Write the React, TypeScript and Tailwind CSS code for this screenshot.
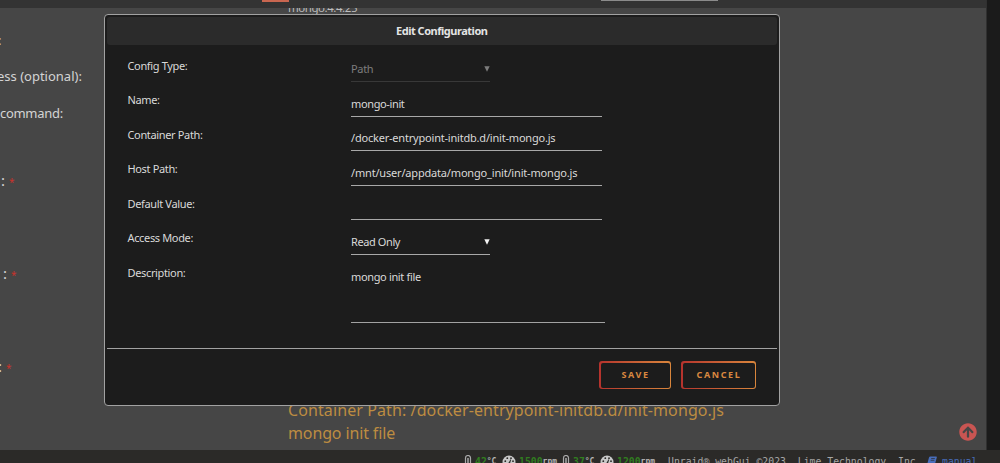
import type { ReactNode } from 'react';
import clsx from 'clsx';
import { FaArrowCircleUp } from 'react-icons/fa';

interface Field {
  label: string;
  value: string;
  kind: 'input' | 'select' | 'disabled';
  tracking: string;
}

const fields: Field[] = [
  { label: 'Config Type:', value: 'Path', kind: 'disabled', tracking: 'tracking-[-0.35px]' },
  { label: 'Name:', value: 'mongo-init', kind: 'input', tracking: 'tracking-[-0.37px]' },
  { label: 'Container Path:', value: '/docker-entrypoint-initdb.d/init-mongo.js', kind: 'input', tracking: 'tracking-[-0.2px]' },
  { label: 'Host Path:', value: '/mnt/user/appdata/mongo_init/init-mongo.js', kind: 'input', tracking: 'tracking-[-0.18px]' },
  { label: 'Default Value:', value: '', kind: 'input', tracking: 'tracking-normal' },
  { label: 'Access Mode:', value: 'Read Only', kind: 'select', tracking: 'tracking-[-0.4px]' }
];

function FieldRow({ label, value, kind, tracking }: Field) {
  return (
    <div className="flex h-[34.5px] items-end">
      <div className="w-[223.5px] pb-[8.5px] leading-4 tracking-[-0.35px]">{label}</div>
      <div
        className={clsx(
          'flex h-6 items-center justify-between border-b pb-[1px] leading-4',
          tracking,
          kind === 'input' ? 'w-[251px]' : 'w-[139px]',
          kind === 'disabled' ? 'border-[#383838] text-[#7c7c7c]' : 'border-[#a8a8a8]'
        )}
      >
        <span>{value}</span>
        {kind !== 'input' && (
          <svg viewBox="0 0 6 6" className={clsx('h-[6px] w-[6px]', kind === 'select' && 'text-[#f2f2f2]')} fill="currentColor">
            <path d="M0.3 0.2h5.4L3 5.8z" />
          </svg>
        )}
      </div>
    </div>
  );
}

function DialogButton({ children, className }: { children: ReactNode; className: string }) {
  return (
    <button className={clsx('h-7 rounded-[3px] bg-linear-to-r from-[#b5322d] to-[#d9863c] p-[1.5px]', className)}>
      <span className="flex h-full items-center justify-center rounded-[2px] bg-[#1c1c1c] pl-[1px] text-[9px] font-bold tracking-[1.6px] text-[#d98840]">
        {children}
      </span>
    </button>
  );
}

function Required({ className }: { className: string }) {
  return (
    <div className={clsx('flex h-6 items-center text-[15px] leading-6 text-[#d4d4d4]', className)}>
      :<span className="ml-[4px] pt-[3px] text-[10px] text-[#c8322b]">*</span>
    </div>
  );
}

function Thermometer() {
  return (
    <svg viewBox="0 0 8 14" className="h-[14px] w-2" fill="none" stroke="#a9a9a9">
      <path d="M1.5 14V3a2.5 2.5 0 0 1 5 0v11" strokeWidth="1.2" />
      <path d="M4 3v11" strokeWidth="1.5" />
    </svg>
  );
}

function Gauge() {
  return (
    <svg viewBox="0 0 14 14" className="h-[14px] w-[14px]">
      <circle cx="7" cy="7" r="6.5" fill="#c9c9c9" />
      <g fill="#2b2a28">
        <circle cx="3.3" cy="6.2" r="0.9" />
        <circle cx="5.3" cy="3.2" r="0.9" />
        <circle cx="9" cy="3.2" r="0.9" />
        <circle cx="11" cy="6.2" r="0.9" />
        <path d="M6.4 8 8.6 4.2l0.6 0.3L8 8.5z" />
      </g>
    </svg>
  );
}

function Book() {
  return (
    <svg viewBox="0 0 10 10" className="mt-[1px] mr-[5px] h-[10px] w-[10px]">
      <path d="M3.4 0.5h5.8q0.9 0 0.6 1L8 8q-0.3 1-1.2 1H1Q0 9 0.3 7.8L2 1.6Q2.300 0.5 3.400 0.500z" fill="#486dba" />
      <path d="M4.200 2.500h3.600M3.700 4.300h3.600" stroke="#2b2a28" strokeWidth="0.7" />
    </svg>
  );
}

function StatusBar() {
  return (
    <footer className="h-[13px] overflow-hidden bg-[#2b2a28] font-['DejaVu_Sans_Mono',monospace] text-[9.8px] leading-[14px] text-[#a6a6a6]">
      <div className="flex w-[1100px] pt-[5px] pl-[464px] whitespace-pre">
        <div className="flex w-[38px] text-[#b5b5b5]"><Thermometer /><span className="ml-[3px] font-bold text-[#317d20]">42</span><b className="text-[8px]">°C</b></div>
        <div className="flex w-[60px] text-[#b5b5b5]"><Gauge /><span className="ml-[3px] font-bold text-[#317d20]">1500</span><b className="text-[8px]">rpm</b></div>
        <div className="flex w-[38px] text-[#b5b5b5]"><Thermometer /><span className="ml-[3px] font-bold text-[#317d20]">37</span><b className="text-[8px]">°C</b></div>
        <div className="flex w-[68px] text-[#b5b5b5]"><Gauge /><span className="ml-[3px] font-bold text-[#317d20]">1200</span><b className="text-[8px]">rpm</b></div>
        <span className="w-[259px]">Unraid® webGui ©2023, Lime Technology, Inc.</span>
        <span className="flex text-[#486dba]"><Book />manual</span>
      </div>
    </footer>
  );
}

function EditDialog() {
  return (
    <div className="absolute top-[14px] left-[104px] flex h-[392px] w-[675.5px] flex-col rounded-[4px] border border-[#a2a2a2] bg-[#1c1c1c] p-[2px] text-[11px] text-[#d9d9d9]">
      <div className="flex h-[28px] shrink-0 items-center justify-center rounded-[3px] bg-[#2b2b2b] text-[11px] font-bold tracking-[-0.48px] text-[#e4e4e4]">
        Edit Configuration
      </div>
      <div className="h-[303px] pt-[2.5px] pl-[20.5px]">
        {fields.map((field) => (
          <FieldRow key={field.label} {...field} />
        ))}
        <div className="flex h-[68px] pt-[9px] tracking-[-0.35px]">
          <div className="w-[223.5px] pt-[1px] leading-4">Description:</div>
          <div className="w-[254px] border-b border-[#a2a2a2] pt-[5px] leading-4">mongo init file</div>
        </div>
      </div>
      <div className="flex grow items-start justify-end gap-[10px] border-t border-[#a2a2a2] pt-[12px] pr-[20.5px]">
        <DialogButton className="w-[72px]">SAVE</DialogButton>
        <DialogButton className="w-[75px]">CANCEL</DialogButton>
      </div>
    </div>
  );
}

export default function App() {
  return (
    <div className="relative flex h-[463px] w-[1000px] flex-col overflow-hidden bg-[#464646] font-['Noto_Sans',sans-serif]">
      <div className="flex min-h-0 grow">
        <div className="flex w-[986px] flex-col">
          <header className="flex h-2 shrink-0 items-start bg-[#333333] pl-[262px]">
            <div className="h-[2px] w-[27px] bg-[#c86650]" />
            <div className="ml-[312px] h-[1px] w-[117px] bg-[#8b8b8b]" />
          </header>
          <main className="flex min-h-0 grow overflow-hidden">
            <div className="w-[288px] text-[13px] whitespace-nowrap text-[#d4d4d4]">
              <div className="-ml-[2px] h-[55px] pt-[22px] leading-5">:</div>
              <div className="-ml-[3px] h-[37px] pt-[3px] leading-5">ess (optional):</div>
              <div className="h-[68px] pt-[3px] leading-5 tracking-[-0.3px]">command:</div>
              <Required className="ml-[1px]" />
              <Required className="mt-[69px] ml-[3px]" />
              <Required className="mt-[69px] -ml-[2px]" />
            </div>
            <div className="flex grow flex-col text-[16px] whitespace-nowrap text-[#bd8c41]">
              <div className="-mt-[8px] h-[399px] text-[11.5px] leading-4 tracking-[-0.45px] text-[#bcbcbc]">mongo:4.4.25</div>
              <div className="leading-[23px] tracking-[0.1px]">Container Path: /docker-entrypoint-initdb.d/init-mongo.js</div>
              <div className="leading-[23px] tracking-[-0.13px]">mongo init file</div>
            </div>
            <FaArrowCircleUp className="mr-[9.5px] mb-[9px] h-[18px] w-[18px] self-end text-[#c95552]" />
          </main>
        </div>
        <div className="grow border-l border-[#303030] bg-[#1b1b1b]" />
      </div>
      <StatusBar />
      <EditDialog />
    </div>
  );
}
